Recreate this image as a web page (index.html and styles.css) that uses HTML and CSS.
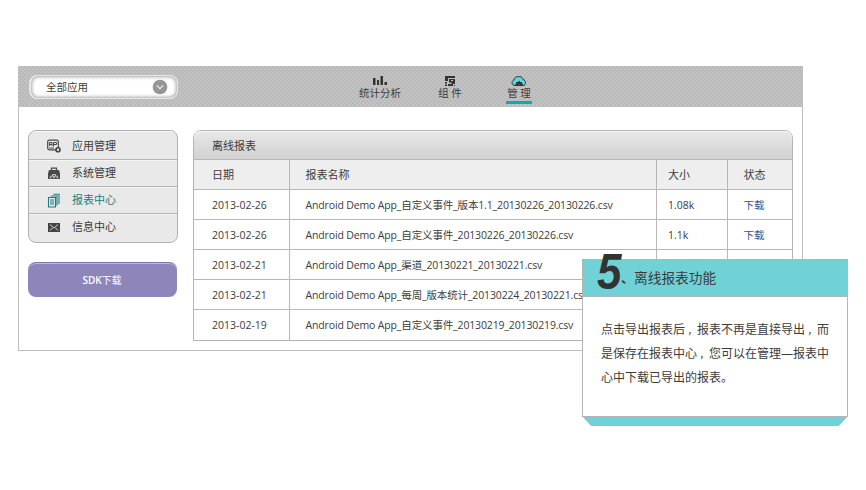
FILE: index.html
```html
<!DOCTYPE html>
<html lang="zh-CN">
<head>
<meta charset="utf-8">
<title>离线报表</title>
<link rel="stylesheet" href="styles.css">
</head>
<body>
<div class="window">
  <header class="topbar">
    <div class="select"><span>全部应用</span>
      <svg width="16" height="16" viewBox="0 0 16 16"><circle cx="8" cy="8" r="7.3" fill="#969696"/><path d="M4.700 6.300 8 9.600l3.300-3.300" fill="none" stroke="#eee" stroke-width="1.200"/></svg>
    </div>
    <nav class="nav">
      <a class="tab stats"><svg width="14" height="10" viewBox="0 0 14 10"><path d="M0 2h2.500v7H0zM4 4h2v5H4zM7.500 0H10v9H7.500zM11.500 6H14v3h-2.500z" fill="#333"/></svg><span>统计分析</span></a>
      <a class="tab parts"><svg width="10" height="10" viewBox="0 0 10 10"><path d="M0 0h10v2H3v3H0zM4 3h6v5H8v2H3V8h3.500V6.500H4zM0 6h2v1.500H0zM0 8.500h2V10H0zM9 9h1v1H9z" fill="#333"/><path d="M6 4.500h2" stroke="#c0c0c0"/></svg><span>组 件</span></a>
      <a class="tab manage"><svg width="16" height="12" viewBox="0 0 16 12"><path d="M4 10.500C.5 10.500 0 6 3 5 3 2.500 6 1 8.500 1.700 11 1.700 12 3.200 12 4.600 15.500 5.200 15.300 10.500 12 10.500z" fill="#5fd5dc" stroke="#333"/><path d="M4.500 11V9l1-2 1.500.3L7.500 6h1.200l.5 1.300 1.500-.3 1 2v2H9.500a1.500 1.500 0 0 0-3 0z" fill="#333"/></svg><span>管 理</span></a>
    </nav>
  </header>
  <main class="content">
    <aside class="side">
      <ul class="menu">
        <li><svg width="14" height="14" viewBox="0 0 14 14"><rect x=".7" y="1.200" width="10.600" height="9.600" rx="1.500" fill="none" stroke="#4a4a4a" stroke-width="1.200"/><path d="M2.500 7V3.500H5V7M2.500 5.500H5M6.500 7.500v-4h3v2h-3M2 9h5" fill="none" stroke="#4a4a4a"/><circle cx="11" cy="10.800" r="2" fill="#e9e9e9" stroke="#444" stroke-width="1.600"/></svg>应用管理</li>
        <li><svg width="14" height="14" viewBox="0 0 14 14"><path d="M4.500 5V2.200h5V5" fill="none" stroke="#4a4a4a" stroke-width="1.300"/><path d="M2 4h10l1 3.500V13H1V7.500z" fill="#4a4a4a"/><path d="M3.500 11.500v-1.300h2M8.500 10.200h2v1.300M5.500 8.500h3v1.700h-3zM7 10.200v1.300M2.500 11.800h2M6 11.800h2M9.500 11.800h2" fill="none" stroke="#ddd" stroke-width=".8"/></svg>系统管理</li>
        <li class="active"><svg width="14" height="15" viewBox="0 0 14 15"><path d="M1.500 4.500h7v9.500h-7zM4 3h6v9.500M6.500 1.300H12V11M3 7h4M3 9h4M3 11h4" fill="none" stroke="#16807f" stroke-width="1.100"/></svg>报表中心</li>
        <li><svg width="14" height="14" viewBox="0 0 14 14"><path d="M1 3h12v9H1z" fill="#444"/><path d="m3 4.500 4 3.500 4-3.500M3 10.500l2.500-2.500M11 10.500l-2.500-2.500" fill="none" stroke="#e4e4e4" stroke-width=".9"/></svg>信息中心</li>
      </ul>
      <a class="sdk"><b>SDK</b>下载</a>
    </aside>
    <section class="report">
      <h1>离线报表</h1>
      <div class="row head"><span>日期</span><span>报表名称</span><span>大小</span><span>状态</span></div>
      <div class="row"><span>2013-02-26</span><span>Android Demo App_自定义事件_版本1.1_20130226_20130226.csv</span><span>1.08k</span><a>下载</a></div>
      <div class="row"><span>2013-02-26</span><span>Android Demo App_自定义事件_20130226_20130226.csv</span><span>1.1k</span><a>下载</a></div>
      <div class="row"><span>2013-02-21</span><span>Android Demo App_渠道_20130221_20130221.csv</span><span></span><a></a></div>
      <div class="row"><span>2013-02-21</span><span>Android Demo App_每周_版本统计_20130224_20130221.csv</span><span></span><a></a></div>
      <div class="row last"><span>2013-02-19</span><span>Android Demo App_自定义事件_20130219_20130219.csv</span><span></span><a></a></div>
    </section>
  </main>
</div>
<div class="callout">
  <h2><span class="num">5</span><span class="mark">、</span>离线报表功能</h2>
  <p>点击导出报表后<i>，</i>报表不再是直接导出<i>，</i>而<br>是保存在报表中心<i>，</i>您可以在管理—报表中<br>心中下载已导出的报表。</p>
  <svg class="fold" width="266" height="10" viewBox="0 0 266 10"><path d="M1 .5 9 9.500h248l8-9z" fill="#70d2d7" stroke="#b4b4b4"/></svg>
</div>
</body>
</html>
```

FILE: styles.css
```css
* { box-sizing: border-box; }
body {
  margin: 0;
  width: 866px;
  height: 490px;
  padding: 66px 0 0 18px;
  overflow: hidden;
  background: #fff;
  color: #3c3c3c;
  font: 11px/16px "Open Sans", "Noto Sans CJK SC", sans-serif;
}
.window {
  width: 785px;
  height: 285px;
  border: 1px solid #bebebe;
  border-top: 0;
}
.topbar {
  height: 41px;
  margin: 0 -1px;
  padding: 9px 0 0 11px;
  display: flex;
  background: repeating-conic-gradient(#bababa 0 25%, #c2c2c2 0 50%) 0 0 / 4px 4px;
}
.select {
  width: 149px;
  height: 24px;
  padding: 0 9px 0 15px;
  display: flex;
  align-items: center;
  justify-content: space-between;
  border: 1px solid #e6e6e6;
  border-left-width: 2px;
  border-radius: 8px;
  background: #fff;
  box-shadow: inset 0 0 4px #777;
  font-size: 10.5px;
}
.nav { display: flex; }
.tab {
  height: 30px;
  display: flex;
  flex-direction: column;
  align-items: center;
  font-size: 10.5px;
  line-height: 14px;
  white-space: nowrap;
}
.tab svg { height: 10px; margin: 1px 0 0; flex: none; }
.stats { width: 42px; margin-left: 181px; }
.parts { width: 26px; margin-left: 36px; }
.manage { width: 26px; height: 29px; margin-left: 43px; border-bottom: 3px solid #0cabb1; }
.manage svg { height: 12px; margin: 0 0 -1px; }
.content { display: flex; padding: 23px 9px 0; }
.side { width: 150px; margin-right: 15px; }
.menu {
  height: 113px;
  margin: 0 0 19px;
  padding: 0;
  list-style: none;
  border: 1px solid #b0b0b0;
  border-radius: 8px;
  background: #e9e9e9;
  overflow: hidden;
}
.menu li {
  height: 27px;
  padding-left: 18px;
  display: flex;
  align-items: center;
  border-bottom: 1px solid #b5b5b5;
  box-shadow: inset 0 1px #f5f5f5;
}
.menu li:first-child { height: 29px; padding-top: 1px; }
.menu li:last-child { border: 0; height: 26px; }
.menu svg { margin-right: 11px; }
.menu .active { color: #16807f; }
.sdk {
  width: 149px;
  height: 35px;
  padding-right: 1px;
  display: flex;
  align-items: center;
  justify-content: center;
  border-radius: 8px;
  border-top: 1px solid #7d75ad;
  box-shadow: inset 0 1px #bdb8dc;
  background: #8e86bb;
  color: #fff;
  font-size: 10px;
}
.sdk b { font-weight: 600; }
.report {
  width: 600px;
  height: 211px;
  border: 1px solid #b4b4b4;
  border-radius: 8px 8px 0 0;
}
.report h1 {
  height: 28px;
  margin: 0;
  padding: 0 18px;
  border-radius: 7px 7px 0 0;
  background: linear-gradient(#e8e8e8, #d1d1d1);
  box-shadow: inset 0 1px #f5f5f5;
  font-size: 11px;
  font-weight: 400;
  line-height: 29px;
}
.row {
  height: 30px;
  display: grid;
  grid-template-columns: 95px 367px 71px 1fr;
  border-top: 1px solid #b8b8b8;
  line-height: 30px;
  font-size: 10.5px;
  white-space: nowrap;
}
.last { height: 31px; }
.row > * { height: 100%; padding-left: 18px; }
.row > * + * { padding-left: 15.500px; border-left: 1px solid #b8b8b8; }
.row > :nth-child(2) { letter-spacing: -.145px; }
.row > :nth-child(3) { padding-left: 11px; }
.row a { color: #2c5596; }
.head { background: #eee; font-size: 11px; }
.head > :nth-child(2) { letter-spacing: 0; }
.callout {
  position: absolute;
  left: 582px;
  top: 259px;
  width: 266px;
  height: 158px;
  border: 1px solid #b4b4b4;
  background: #fff;
}
.callout h2 {
  height: 37px;
  margin: 0;
  padding-left: 14px;
  display: flex;
  border-bottom: 1px solid #b4b4b4;
  background: #70d2d7;
  font-size: 13.7px;
  font-weight: 400;
  line-height: 36px;
}
.num {
  width: 24px;
  margin-top: -6px;
  color: #333;
  font: italic bold 50px/36px "Liberation Sans", sans-serif;
  transform: scaleX(.88);
  transform-origin: left;
}
.mark { width: 13px; margin-top: -1px; font-weight: 700; font-size: 13px; }
.callout p {
  margin: 0;
  padding: 21px 0 0 18px;
  font-size: 12px;
  line-height: 24px;
  white-space: nowrap;
}
.callout i { padding-left: 2.500px; font-size: 9.500px; font-style: normal; line-height: 0; }
.fold { position: absolute; left: -1px; top: 156px; }
```
